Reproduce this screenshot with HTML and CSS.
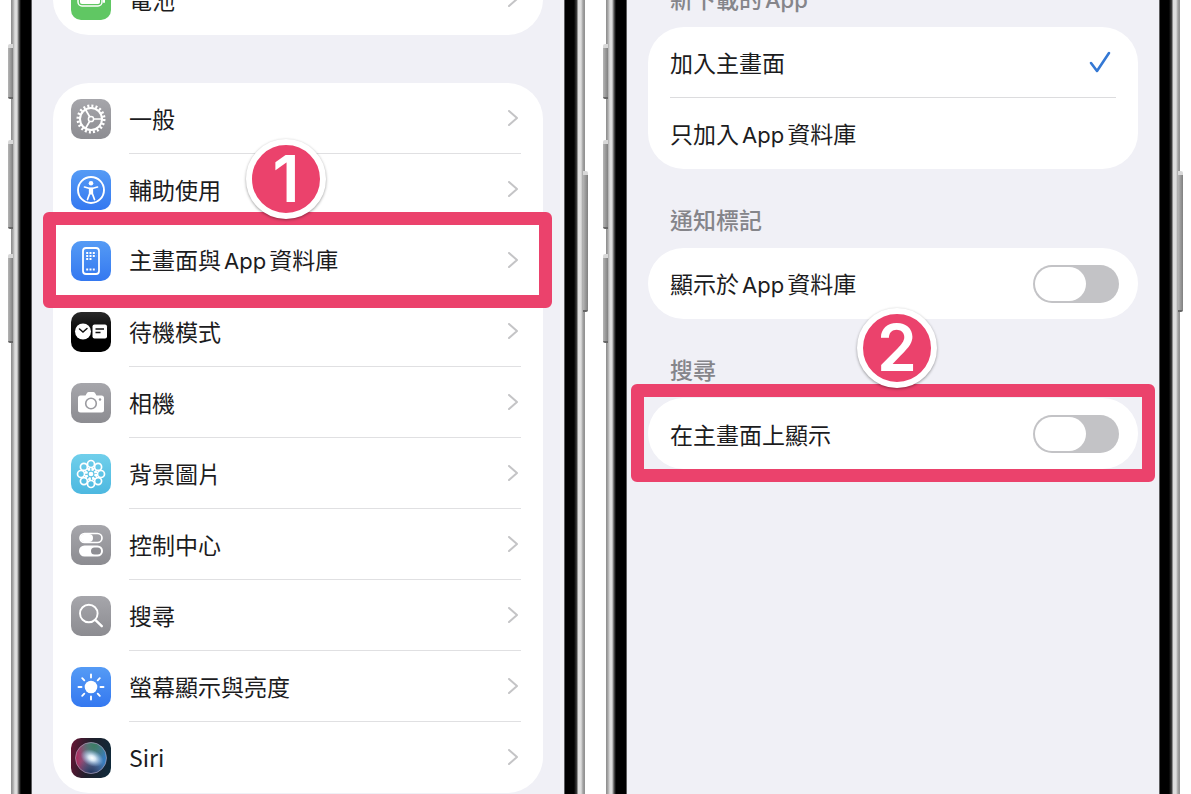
FILE: index.html
```html
<!doctype html>
<html lang="zh-Hant">
<head>
  <meta charset="UTF-8">
  <meta name="viewport" content="width=device-width, initial-scale=1.0">
  <title>主畫面與 App 資料庫</title>
  <link rel="stylesheet" href="styles.css">
</head>
<body>
  <svg class="defs" aria-hidden="true">
    <defs>
      <symbol id="chevron" viewBox="0 0 10 16">
        <path d="M1 1l8 7-8 7" fill="none" stroke="#c4c4c6" stroke-width="2" stroke-linecap="round" stroke-linejoin="round"/>
      </symbol>
    </defs>
  </svg>

  <main class="phones">
    <!-- Step 1: settings list -->
    <section class="phone">
      <span class="side-button action"></span>
      <span class="side-button volume-up"></span>
      <span class="side-button volume-down"></span>
      <span class="side-button power"></span>
      <div class="screen">
        <div class="settings">
          <ul class="card">
            <li><a class="row" href="#">
              <svg class="icon green" viewBox="0 0 40 40">
                <rect x="7" y="14" width="24" height="12" rx="4" fill="none" stroke="#fff" stroke-width="1.5"/>
                <rect x="9" y="16" width="20" height="8" rx="2" fill="#fff"/>
                <path d="M33 18v4" stroke="#fff" stroke-width="2" stroke-linecap="round"/>
              </svg>
              <span class="row-body">電池 <svg class="chevron"><use href="#chevron"/></svg></span>
            </a></li>
          </ul>

          <ul class="card">
            <li><a class="row" href="#">
              <svg class="icon gray" viewBox="0 0 40 40" fill="none" stroke="#fff">
                <circle cx="20" cy="20" r="13" stroke-width="3" stroke-dasharray="2 2.084"/>
                <circle cx="20" cy="20" r="11" stroke-width="2"/>
                <circle cx="20" cy="20" r="2.6" stroke-width="1.5"/>
                <path d="M22.6 20H31M18.7 17.7l-4.2-7.2M18.7 22.3l-4.2 7.2" stroke-width="1.7"/>
              </svg>
              <span class="row-body">一般 <svg class="chevron"><use href="#chevron"/></svg></span>
            </a></li>
            <li><a class="row" href="#">
              <svg class="icon blue" viewBox="0 0 40 40">
                <circle cx="20" cy="20" r="13" fill="none" stroke="#fff" stroke-width="1.9"/>
                <circle cx="20" cy="13.2" r="2.3" fill="#fff"/>
                <path d="M13.5 17l4.5 1.3h4l4.5-1.3M18.7 18.5v5l-2.2 6M21.3 18.5v5l2.2 6" fill="none" stroke="#fff" stroke-width="1.7" stroke-linecap="round" stroke-linejoin="round"/>
                <path d="M18 17.8h4v6.7h-4z" fill="#fff"/>
              </svg>
              <span class="row-body">輔助使用 <svg class="chevron"><use href="#chevron"/></svg></span>
            </a></li>
            <li class="marked">
              <a class="row" href="#">
                <svg class="icon blue" viewBox="0 0 40 40">
                  <rect x="12" y="7" width="16" height="26" rx="3" fill="none" stroke="#fff" stroke-width="1.8"/>
                  <path d="M15.2 12h10M15.2 15h10M15.2 18h6.5M15.2 28.5h10" stroke="#fff" stroke-width="2" stroke-dasharray="2 1.3"/>
                </svg>
                <span class="row-body"><span>主畫面與<span class="latin">App</span>資料庫</span> <svg class="chevron"><use href="#chevron"/></svg></span>
              </a>
              <div class="highlight"><span class="badge">1</span></div>
            </li>
            <li><a class="row" href="#">
              <svg class="icon black" viewBox="0 0 40 40">
                <circle cx="12" cy="19.5" r="8" fill="#fff"/>
                <path d="M8.5 17l3.5 3 4-3.5" fill="none" stroke="#111" stroke-width="1.5" stroke-linecap="round"/>
                <rect x="21.5" y="12.5" width="14.5" height="14" rx="2" fill="#fff"/>
                <path d="M24.500 17h8.500M24.500 20.500h5" stroke="#111" stroke-width="1.500"/>
              </svg>
              <span class="row-body">待機模式 <svg class="chevron"><use href="#chevron"/></svg></span>
            </a></li>
            <li><a class="row" href="#">
              <svg class="icon gray" viewBox="0 0 40 40">
                <path d="M9.500 12.500h5l1.500-2.500q.6-1 1.700-1h4.600q1.100 0 1.700 1l1.500 2.500h5q2.500 0 2.500 2.500v12q0 2.500-2.500 2.500h-21Q7 29.500 7 27V15q0-2.500 2.500-2.500z" fill="#fff"/>
                <circle cx="20" cy="20.5" r="5.3" fill="none" stroke="#9b9ba0" stroke-width="1.6"/>
                <circle cx="29" cy="16.5" r="1.2" fill="#9b9ba0"/>
              </svg>
              <span class="row-body">相機 <svg class="chevron"><use href="#chevron"/></svg></span>
            </a></li>
            <li><a class="row" href="#">
              <svg class="icon cyan" viewBox="0 0 40 40" fill="none" stroke="#fff" stroke-width="1.7">
                <circle cx="20" cy="10" r="3.5"/>
                <circle cx="27.1" cy="12.9" r="3.5"/>
                <circle cx="30" cy="20" r="3.5"/>
                <circle cx="27.1" cy="27.1" r="3.5"/>
                <circle cx="20" cy="30" r="3.5"/>
                <circle cx="12.9" cy="27.1" r="3.5"/>
                <circle cx="10" cy="20" r="3.5"/>
                <circle cx="12.9" cy="12.9" r="3.5"/>
                <circle cx="20" cy="20" r="5" stroke-width="3" stroke-dasharray="2.6 1.3"/>
                <circle cx="20" cy="20" r="1.5" fill="#fff"/>
              </svg>
              <span class="row-body">背景圖片 <svg class="chevron"><use href="#chevron"/></svg></span>
            </a></li>
            <li><a class="row" href="#">
              <svg class="icon gray" viewBox="0 0 40 40">
                <rect x="9" y="8.5" width="22" height="9" rx="4.5" fill="none" stroke="#fff" stroke-width="1.7"/>
                <rect x="9.5" y="9" width="12.5" height="8" rx="4" fill="#fff"/>
                <rect x="8" y="20.5" width="24" height="11" rx="5.5" fill="#fff"/>
                <rect x="20" y="22.5" width="10" height="7" rx="3.5" fill="#8e8e93"/>
              </svg>
              <span class="row-body">控制中心 <svg class="chevron"><use href="#chevron"/></svg></span>
            </a></li>
            <li><a class="row" href="#">
              <svg class="icon gray" viewBox="0 0 40 40" fill="none" stroke="#fff" stroke-linecap="round">
                <circle cx="17.8" cy="17.5" r="8.8" stroke-width="1.9"/>
                <path d="M24.5 24.2l6.3 6" stroke-width="2.4"/>
              </svg>
              <span class="row-body">搜尋 <svg class="chevron"><use href="#chevron"/></svg></span>
            </a></li>
            <li><a class="row" href="#">
              <svg class="icon blue" viewBox="0 0 40 40">
                <circle cx="20" cy="20" r="6.3" fill="#fff"/>
                <path d="M20 7.5v3M20 29.5v3M7.5 20h3M29.5 20h3M11.2 11.2l2.1 2.1M26.7 26.7l2.1 2.1M11.2 28.8l2.1-2.1M26.7 13.3l2.1-2.1" stroke="#fff" stroke-width="1.9" stroke-linecap="round"/>
              </svg>
              <span class="row-body">螢幕顯示與亮度 <svg class="chevron"><use href="#chevron"/></svg></span>
            </a></li>
            <li><a class="row" href="#">
              <svg class="icon siri" viewBox="0 0 40 40">
                <defs>
                  <linearGradient id="orb" x1="0" y1="0" x2="1" y2="0">
                    <stop offset="0" stop-color="#b02a5c"/>
                    <stop offset=".45" stop-color="#6f6f8e"/>
                    <stop offset="1" stop-color="#2f7fc4"/>
                  </linearGradient>
                  <radialGradient id="orb-top" cx=".6" cy=".1" r=".5">
                    <stop offset="0" stop-color="#3c7d63"/>
                    <stop offset="1" stop-color="#3c7d63" stop-opacity="0"/>
                  </radialGradient>
                  <radialGradient id="orb-bottom" cx=".5" cy="1" r=".5">
                    <stop offset="0" stop-color="#20345e"/>
                    <stop offset="1" stop-color="#20345e" stop-opacity="0"/>
                  </radialGradient>
                  <radialGradient id="glow">
                    <stop offset="0" stop-color="#fff"/>
                    <stop offset=".3" stop-color="#e6f4ff" stop-opacity=".9"/>
                    <stop offset="1" stop-color="#9fd3ff" stop-opacity="0"/>
                  </radialGradient>
                </defs>
                <circle cx="20" cy="20" r="15.5" fill="url(#orb)"/>
                <circle cx="20" cy="20" r="15.5" fill="url(#orb-top)"/>
                <circle cx="20" cy="20" r="15.5" fill="url(#orb-bottom)"/>
                <ellipse cx="21" cy="20" rx="12" ry="8" fill="url(#glow)" transform="rotate(25 21 20)"/>
                <circle cx="20" cy="20" r="15.5" fill="none" stroke="#b9a8c4" stroke-opacity=".6"/>
              </svg>
              <span class="row-body">Siri <svg class="chevron"><use href="#chevron"/></svg></span>
            </a></li>
          </ul>
        </div>
      </div>
    </section>

    <!-- Step 2: home screen and app library -->
    <section class="phone">
      <span class="side-button action"></span>
      <span class="side-button volume-up"></span>
      <span class="side-button volume-down"></span>
      <span class="side-button power"></span>
      <div class="screen">
        <form class="options">
          <h2>新下載的<span class="latin">App</span></h2>
          <div class="card">
            <label class="option">
              <input type="radio" name="new-app" checked>
              <span class="option-body">加入主畫面
                <svg class="check" viewBox="0 0 22 22"><path d="M2 12l6 8L20 2" fill="none" stroke="#3478d4" stroke-width="2.6" stroke-linecap="round" stroke-linejoin="round"/></svg>
              </span>
            </label>
            <label class="option">
              <input type="radio" name="new-app">
              <span class="option-body"><span>只加入<span class="latin">App</span>資料庫</span>
                <svg class="check" viewBox="0 0 22 22"><path d="M2 12l6 8L20 2" fill="none" stroke="#3478d4" stroke-width="2.6" stroke-linecap="round" stroke-linejoin="round"/></svg>
              </span>
            </label>
          </div>

          <h2>通知標記</h2>
          <div class="card">
            <div class="switch-row">
              <label for="show-library">顯示於<span class="latin">App</span>資料庫</label>
              <input class="switch" type="checkbox" id="show-library">
            </div>
          </div>

          <h2>搜尋</h2>
          <div class="card marked">
            <div class="switch-row">
              <label for="show-search">在主畫面上顯示</label>
              <input class="switch" type="checkbox" id="show-search">
            </div>
            <div class="highlight wide"><span class="badge">2</span></div>
          </div>
        </form>
      </div>
    </section>
  </main>
</body>
</html>
```
FILE: styles.css
```css
* {
  box-sizing: border-box;
}
body {
  margin: 0;
  background: #fff;
  color: #1c1c1e;
  font-family: "Noto Sans CJK TC", sans-serif;
  font-size: 23px;
  line-height: 32px;
}
.defs {
  position: absolute;
  width: 0;
  height: 0;
}
.phones {
  display: grid;
  grid-template-columns: 1fr 1fr;
  gap: 21px;
  height: 100vh;
  padding: 0 11px;
  overflow: hidden;
}

/* Phone frame */
.phone {
  position: relative;
  padding: 0 21px;
  background: linear-gradient(90deg,
    #8a8a8a 0, #a8a8a8 2px, #dedede 4px, #dcdcdc 6px, #555 8px, #000 10px, #000 20px, #b8b8bc 21px,
    #b8b8bc calc(100% - 21px), #000 calc(100% - 20px), #000 calc(100% - 11px), #444 calc(100% - 8px),
    #dcdcdc calc(100% - 7px), #dedede calc(100% - 4px), #a0a0a0 calc(100% - 2px), #8f8f8f 100%);
}
.side-button {
  position: absolute;
  left: -3px;
  width: 5px;
  border-radius: 2px 0 0 2px;
  background: linear-gradient(90deg, #b5b5b5, #808080);
  border-top: 4px solid #d8d8d8;
  border-bottom: 2px solid #666;
}
.action {
  top: 44px;
  height: 55px;
}
.volume-up {
  top: 140px;
  height: 89px;
}
.volume-down {
  top: 254px;
  height: 89px;
}
.power {
  top: 171px;
  right: -3px;
  left: auto;
  height: 141px;
  border-radius: 0 2px 2px 0;
}
.screen {
  height: 100vh;
  padding: 0 21px;
  background: #f0f0f6;
  overflow: hidden;
}

/* Both pages are scrolled down a little */
.settings {
  display: flex;
  flex-direction: column;
  gap: 48px;
  margin-top: -36px;
}
.options {
  margin-top: -52px;
}

.card {
  margin: 0;
  padding: 0;
  list-style: none;
  background: #fff;
  border-radius: 36px;
}
.row {
  display: flex;
  align-items: center;
  gap: 18px;
  height: 71px;
  padding: 0 22px 0 18px;
  color: inherit;
  text-decoration: none;
}
.row-body {
  flex: 1;
  display: flex;
  align-items: center;
  justify-content: space-between;
  height: 71px;
  padding-right: 3px;
  border-bottom: 1px solid #e0e0e2;
}
li:last-child .row-body,
.marked .row-body {
  border-bottom-color: transparent;
}
.chevron {
  width: 10px;
  height: 16px;
}
.latin {
  margin: 0 3px;
  font-family: Inter, sans-serif;
  font-size: 22px;
}

.icon {
  width: 40px;
  height: 40px;
  border-radius: 10px;
}
.green {
  background: #60c763;
}
.gray {
  background: linear-gradient(#a6a6ab, #8c8c91);
}
.blue {
  background: linear-gradient(#559bf5, #3478f0);
}
.cyan {
  background: linear-gradient(#70cfeb, #4db8e0);
}
.black {
  background: linear-gradient(#2a2a2a, #000 60%);
}
.siri {
  background: linear-gradient(100deg, #6a1535, #1f1f2b 45%, #0e2b3c);
}

/* Options page */
.options h2 {
  height: 79px;
  margin: 0;
  padding: 34px 22px 0;
  color: #85858a;
  font-size: 23px;
  font-weight: 500;
}
.option {
  display: block;
  padding: 0 22px;
}
.option input {
  position: absolute;
  opacity: 0;
}
.option-body {
  display: flex;
  align-items: center;
  justify-content: space-between;
  height: 71px;
  padding-right: 5px;
}
.option:first-child .option-body {
  border-bottom: 1px solid #dcdcde;
}
.check {
  width: 22px;
  height: 22px;
  visibility: hidden;
}
input:checked + .option-body .check {
  visibility: visible;
}
.switch-row {
  display: flex;
  align-items: center;
  justify-content: space-between;
  height: 71px;
  padding: 0 19px 0 22px;
}
.switch {
  appearance: none;
  width: 86px;
  height: 38px;
  margin: 0;
  padding: 2px;
  border-radius: 19px;
  background: #c3c3c6;
}
.switch::before {
  content: '';
  display: block;
  width: 51px;
  height: 34px;
  border-radius: 17px;
  background: #fff;
}
.switch:checked {
  background: #60c763;
}
.switch:checked::before {
  margin-left: auto;
}

/* Step marks drawn over the screens */
.marked {
  position: relative;
}
.highlight {
  position: absolute;
  inset: -13px -9px -12px -10px;
  border: 13px solid #eb426c;
  border-radius: 6px;
  pointer-events: none;
  z-index: 1;
}
.highlight.wide {
  inset: -14px -17px -13px -17px;
}
.badge {
  position: absolute;
  bottom: 100%;
  left: 190px;
  width: 80px;
  height: 80px;
  margin-bottom: 6px;
  border: 6px solid #fff;
  border-radius: 50%;
  background: #eb426c;
  box-shadow: 0 1px 3px rgba(0, 0, 0, 0.4);
  color: #fff;
  font-family: Inter, sans-serif;
  font-size: 64px;
  font-weight: 600;
  line-height: 68px;
  text-align: center;
}
.wide .badge {
  left: 213px;
  margin-bottom: 9px;
}
```
